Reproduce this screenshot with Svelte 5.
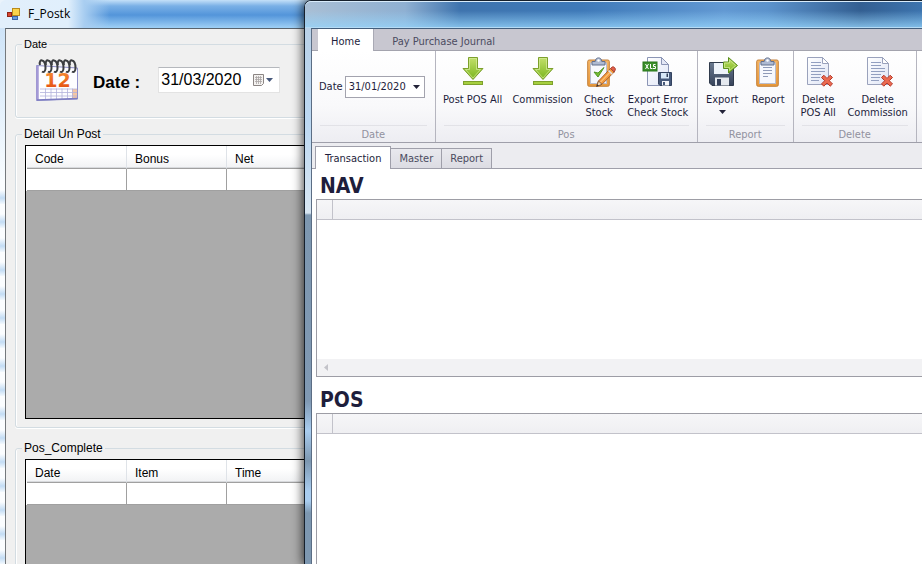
<script>
  let postDate = $state('31/03/2020');
  let ribbonDate = $state('31/01/2020');
  let ribbonTab = $state('Home');
  let pageTab = $state('Transaction');

  const ribbonTabs = ['Home', 'Pay Purchase Journal'];
  const pageTabs = ['Transaction', 'Master', 'Report'];

  const detailColumns = ['Code', 'Bonus', 'Net'];
  const completeColumns = ['Date', 'Item', 'Time'];

  const ribbonGroups = [
    {
      name: 'Pos',
      dense: true,
      items: [
        { lines: ['Post POS All'], icon: 'down', size: 'medium' },
        { lines: ['Commission'], icon: 'down', size: 'medium' },
        { lines: ['Check', 'Stock'], icon: 'check', size: 'small' },
        { lines: ['Export Error', 'Check Stock'], icon: 'xls', size: 'large' }
      ]
    },
    {
      name: 'Report',
      items: [
        { lines: ['Export'], icon: 'export', size: 'small', menu: true },
        { lines: ['Report'], icon: 'clipboard', size: 'small' }
      ]
    },
    {
      name: 'Delete',
      items: [
        { lines: ['Delete', 'POS All'], icon: 'delete', size: 'small' },
        { lines: ['Delete', 'Commission'], icon: 'delete', size: 'medium' }
      ]
    }
  ];
</script>

{#snippet formGrid(columns, label)}
  <div class="form-grid">
    <table aria-label={label}>
      <thead>
        <tr>
          {#each columns as column}<th scope="col">{column}</th>{/each}
          <th class="rest"></th>
        </tr>
      </thead>
      <tbody>
        <tr>
          {#each columns as _}<td></td>{/each}
          <td class="rest"></td>
        </tr>
      </tbody>
    </table>
  </div>
{/snippet}

{#snippet board()}
  <rect x="4.7" y="4" width="21.6" height="26.3" rx="1.5" fill="url(#wood)" stroke="#c4813a" />
  <rect x="7.5" y="7" width="16" height="20.5" fill="#f6f8fd" stroke="#b9bccb" />
  <path d="M9 9V5.5h3.2C12.4 3.200 13.6 1.900 15.500 1.900s3.100 1.300 3.300 3.600H22V9z" fill="#aebad2" stroke="#63708d" />
  <circle cx="15.500" cy="4.500" r="1.200" fill="#fff" />
{/snippet}

{#snippet icon(name)}
  <svg class="icon" viewBox="0 0 32 32" aria-hidden="true">
    {#if name === 'down'}
      <path d="M11.500 1.500h9v11h5.500L16 23.500 6 12.500h5.500z" fill="url(#leaf)" stroke="#7da02c" />
      <path d="M12.500 2.500h7v11h4L16 22 8.500 13.500h4z" fill="none" stroke="#d6ec9b" stroke-opacity=".7" />
      <rect x="6.500" y="25.500" width="19" height="3" fill="#a6cf3f" stroke="#7da02c" />
    {:else if name === 'check'}
      {@render board()}
      <path d="M11 16l4 5 6-9.500-6 5.500z" fill="#77bd36" stroke="#4f9622" />
      <path d="M13.500 30.500l2-5.500L27.500 12.500l3.700 3.500L19 28.300z" fill="#f39a3d" stroke="#a8602a" />
      <path d="M27.500 12.500l1.700-1.500c1.500-.9 3.900 1.500 3 3l-1 2z" fill="#e2604a" stroke="#a84334" />
      <path d="M25.500 14.500l3.700 3.600" stroke="#dde1ea" stroke-width="1.500" />
      <path d="M17 26.600L27 16.400" stroke="#ffd59b" />
      <path d="M13.500 30.500l2-5.500 3.500 3.300z" fill="#f6dcb8" stroke="#8d5c39" />
      <path d="M13.500 30.500l.8-2.300 1.500 1.500z" fill="#333" />
    {:else if name === 'xls'}
      <path d="M5.500 1.500h14l7 7v21h-21z" fill="url(#paper)" stroke="#8b95b5" />
      <path d="M19.500 1.500v7h7z" fill="#e3e7f5" stroke="#8b95b5" />
      <rect x="1" y="6" width="14" height="9" fill="#3b8f2b" stroke="#28761b" />
      <path d="M3.500 8l3 5M6.500 8l-3 5M8.500 8v4.500h2M13.500 8.500h-2v2h2v2h-2.500" fill="none" stroke="#fff" />
      <path d="M16.500 16.500h13v13H18l-1.500-1.500z" fill="#46597a" stroke="#33425f" />
      <rect x="19" y="17" width="8" height="5.500" fill="#d8e8f7" />
      <rect x="24.500" y="17.500" width="1.500" height="3.500" fill="#35415b" />
      <rect x="20" y="25" width="7" height="4.500" fill="#f3f5f9" />
      <rect x="21" y="26" width="2" height="3" fill="#46597a" />
    {:else if name === 'export'}
      <path d="M3.500 6.500h24v23h-21.500l-2.500-2.500z" fill="url(#disk)" stroke="#303b4c" />
      <rect x="8" y="7" width="15" height="11" fill="#eef3fa" />
      <rect x="9" y="21.500" width="14" height="8" fill="#e5e9ef" />
      <rect x="11" y="23" width="4" height="6.500" fill="#35415a" />
      <path d="M17.500 6h5V1.500L31.500 9.500 22.500 17v-4.500h-5z" fill="url(#leaf)" stroke="#5c8f1e" />
      <path d="M18.500 7h5V4l6 5.500-6 5v-3h-5z" fill="none" stroke="#d6ec9b" stroke-opacity=".7" />
    {:else if name === 'clipboard'}
      {@render board()}
      <path d="M11 11.500h9M11 14.500h9M11 17.500h9M11 20.500h5" stroke="#8f9bb8" />
    {:else}
      <path d="M5.500 1.500h15l6 6v21h-21z" fill="url(#paper)" stroke="#9aa2bc" />
      <path d="M20.500 1.500v6h6z" fill="#fff" stroke="#9aa2bc" />
      <path d="M9 6.500h10M9 9.500h10M9 12.500h14M9 15.500h14M9 18.500h10M9 21.500h9M9 24.500h8" stroke="#929fc0" />
      <path d="M19.500 21.500l2.300-2.300 3.200 3.200 3.200-3.200 2.300 2.300-3.200 3.200 3.200 3.200-2.300 2.300-3.200-3.200-3.200 3.200-2.300-2.300 3.200-3.200z" fill="#ea6a50" stroke="#b5392b" />
    {/if}
  </svg>
{/snippet}

<svg class="defs" aria-hidden="true">
  <defs>
    <linearGradient id="leaf" x1="0" y1="0" x2="0" y2="1"><stop offset="0" stop-color="#c3e06c" /><stop offset="1" stop-color="#79b51c" /></linearGradient>
    <linearGradient id="wood" x1="0" y1="0" x2="0" y2="1"><stop offset="0" stop-color="#f6b665" /><stop offset="1" stop-color="#e8983a" /></linearGradient>
    <linearGradient id="paper" x1="0" y1="0" x2="1" y2="1"><stop offset="0" stop-color="#fff" /><stop offset="1" stop-color="#dfe5f6" /></linearGradient>
    <linearGradient id="disk" x1="0" y1="0" x2="0" y2="1"><stop offset="0" stop-color="#6b7a90" /><stop offset="1" stop-color="#37435a" /></linearGradient>
    <linearGradient id="ink" x1="0" y1="0" x2="0" y2="1"><stop offset="0" stop-color="#f79337" /><stop offset="1" stop-color="#e3480f" /></linearGradient>
  </defs>
</svg>

<main class="desktop">
  <section class="window form-window" aria-label="F_Postk">
    <header class="form-title">
      <svg class="app-icon" viewBox="0 0 14 14" aria-hidden="true">
        <rect x="5.500" y="1.500" width="7" height="7" fill="#fbd44c" stroke="#b98a1c" />
        <rect x=".5" y="5.500" width="4" height="4" fill="#d8452e" stroke="#8e2517" />
        <rect x="5.500" y="9.500" width="5" height="3" fill="#6a9ee0" stroke="#3b66a8" />
      </svg>
      <span>F_Postk</span>
    </header>

    <div class="form-body">
      <fieldset class="date-box">
        <legend>Date</legend>
        <div class="date-row">
          <svg class="calendar" viewBox="0 0 42 42" aria-hidden="true">
            <path d="M.5 6.500L41.500 9v31L.5 41.500z" fill="#fdfdff" stroke="#8f90cc" />
            <path d="M1.500 7v34.500" stroke="#a59ad6" stroke-width="2.500" />
            <path d="M36 30h5v9.500h-5z" fill="#f5c7a4" />
            <path d="M4 30h37M4 33.500h37M4 37h37M9.500 29.500v11M15 29.500v11M20.500 29.500v11M26 29.500v11M31.500 29.500v11M36.500 29.500v11" stroke="#b3b2dc" stroke-width=".8" />
            <path d="M1 41l40.500-1.500" stroke="#7c7cc0" stroke-width="1.500" />
            <text x="21.500" y="28" text-anchor="middle" font-family="DejaVu Sans, sans-serif" font-weight="700" font-size="19" fill="url(#ink)">12</text>
            <g fill="none" stroke="#3b3d40" stroke-width="2">
              {#each [4, 10, 16, 22, 28, 34] as x}
                <path d="M{x} 6C{x - 1} 2 {x + 1} 1 {x + 2} 1.500c2.500.5 3.500 4 3.500 7.500 0 3-1.500 5-3.500 3.500" />
              {/each}
            </g>
          </svg>
          <label for="post-date">Date :</label>
          <div class="picker">
            <input id="post-date" type="text" bind:value={postDate} />
            <button type="button" aria-label="Open calendar">
              <svg viewBox="0 0 20 14" aria-hidden="true">
                <path d="M.5 1.500h10v9l-2 2h-8z" fill="#f4f2f0" stroke="#8b8583" />
                <path d="M2 4.500h7M2 6.500h7M2 8.500h7M3.500 3v8M5.500 3v8M7.500 3v8" stroke="#aaa4a4" stroke-width=".8" />
                <path d="M13 5h7l-3.500 4z" fill="#47587b" />
              </svg>
            </button>
          </div>
        </div>
      </fieldset>

      <fieldset class="detail-box">
        <legend>Detail Un Post</legend>
        {@render formGrid(detailColumns, 'Detail Un Post')}
      </fieldset>

      <fieldset class="complete-box">
        <legend>Pos_Complete</legend>
        {@render formGrid(completeColumns, 'Pos_Complete')}
      </fieldset>
    </div>
  </section>

  <section class="window main-window" aria-label="Transactions">
    <header class="glass"></header>
    <div class="client">
      <nav class="ribbon-tabs">
        {#each ribbonTabs as tab}
          <button type="button" class:active={ribbonTab === tab} onclick={() => (ribbonTab = tab)}>{tab}</button>
        {/each}
      </nav>

      <div class="ribbon">
        <section class="group">
          <div class="group-items date-items">
            <label for="ribbon-date">Date</label>
            <div class="combo">
              <input id="ribbon-date" type="text" bind:value={ribbonDate} />
              <button type="button" aria-label="Choose date">
                <svg viewBox="0 0 7 4" aria-hidden="true"><path d="M0 0h7L3.500 4z" fill="#222238" /></svg>
              </button>
            </div>
          </div>
          <div class="caption">Date</div>
        </section>
        {#each ribbonGroups as group}
          <section class="group">
            <div class="group-items" class:dense={group.dense}>
              {#each group.items as item}
                <button type="button" class="tool {item.size}">
                  {@render icon(item.icon)}
                  {#each item.lines as line}<span>{line}</span>{/each}
                  {#if item.menu}
                    <svg class="arrow" viewBox="0 0 7 4" aria-hidden="true"><path d="M0 0h7L3.500 4z" fill="#222238" /></svg>
                  {/if}
                </button>
              {/each}
            </div>
            <div class="caption">{group.name}</div>
          </section>
        {/each}
      </div>

      <nav class="page-tabs">
        {#each pageTabs as tab}
          <button type="button" class:active={pageTab === tab} onclick={() => (pageTab = tab)}>{tab}</button>
        {/each}
      </nav>

      <div class="page">
        <h2>NAV</h2>
        <div class="data-grid nav-grid">
          <table aria-label="NAV">
            <thead><tr><th class="indicator"></th><th></th></tr></thead>
          </table>
          <div class="scrollbar">
            <button type="button" aria-label="Scroll left">
              <svg viewBox="0 0 4 7" aria-hidden="true"><path d="M4 0v7L0 3.500z" fill="#c3c3c9" /></svg>
            </button>
          </div>
        </div>
        <h2>POS</h2>
        <div class="data-grid pos-grid">
          <table aria-label="POS">
            <thead><tr><th class="indicator"></th><th></th></tr></thead>
          </table>
        </div>
      </div>
    </div>
  </section>
</main>

<style>
  :global(body) {
    margin: 0;
    overflow: hidden;
  }

  .desktop,
  .desktop * {
    box-sizing: border-box;
  }

  button,
  input {
    font: inherit;
    color: inherit;
    margin: 0;
    padding: 0;
    border: 0;
    background: none;
  }

  svg {
    display: block;
    flex: none;
    overflow: visible;
  }

  .defs {
    position: absolute;
    width: 0;
    height: 0;
  }

  .desktop {
    position: relative;
    height: 100vh;
    overflow: hidden;
    background: #eaf3fb;
  }

  .window {
    position: absolute;
    display: flex;
    flex-direction: column;
  }

  /* F_Postk form */
  .form-window {
    inset: 0 40% 0 0;
    padding-left: 5px;
    border-radius: 6px 0 0 0;
    font: 12px/14px "Liberation Sans", Arial, sans-serif;
    color: #000;
    background:
      repeating-linear-gradient(180deg, #fbfdff 0 10px, #c3dcf4 18px, #f3f9fe 24px) 0 100% / 5px calc(100% - 180px) no-repeat,
      linear-gradient(180deg, #cfe4f8, #f8fcff) 0 28px / 5px 152px no-repeat,
      linear-gradient(90deg, #e2effb 0, #e0effc 68px, #a9cef1 84px, transparent 110px) 0 0 / 100% 28px no-repeat,
      linear-gradient(180deg, #c4e0f8 0, #7ab0e6 6px, #5395da 15px, #9fd0f6 28px) 0 0 / 100% 28px no-repeat,
      #f3f9fe;
  }

  .form-title {
    display: flex;
    align-items: center;
    gap: 7px;
    height: 28px;
    padding-left: 2px;
    font: 12px/16px "Open Sans", "Noto Sans", sans-serif;
  }

  .app-icon {
    width: 14px;
    height: 14px;
  }

  .form-body {
    flex: 1;
    min-height: 0;
    display: flex;
    flex-direction: column;
    padding: 8px 0 0 9px;
    border-top: 1px solid #59636d;
    border-left: 1px solid #75797d;
    background: #f0f0f0;
  }

  fieldset {
    min-width: 0;
    margin: 0;
    padding: 0 9px 8px;
    border: 1px solid #d3dce2;
    border-radius: 3px;
    box-shadow: inset 1px 0 #fff, 0 1px #fff;
  }

  legend {
    margin-left: -3px;
    padding: 0 2px;
  }

  .date-box legend {
    font-size: 11px;
  }

  .date-row {
    display: flex;
    align-items: center;
    padding: 8px 0 8px 11px;
  }

  .calendar {
    width: 42px;
    height: 42px;
  }

  .date-row label {
    margin: 6px 18px 0 15px;
    font-size: 17px;
    font-weight: 700;
    line-height: 20px;
  }

  .picker {
    display: flex;
    align-items: center;
    width: 122px;
    height: 26px;
    padding: 0 6px 0 2px;
    border: 1px solid #e3e3e3;
    border-top-color: #b5b8bd;
    background: #fff;
  }

  .picker input {
    flex: 1;
    min-width: 0;
    font-size: 16px;
    line-height: 20px;
  }

  .picker svg {
    width: 20px;
    height: 14px;
  }

  .detail-box {
    margin-top: 9px;
  }

  .complete-box {
    flex: none;
    margin-top: 13px;
  }

  .form-grid {
    height: 274px;
    margin-top: 4px;
    border: 1px solid #000;
    background: #ababab;
    overflow: hidden;
  }

  .form-grid table {
    width: 100%;
    border-left: 1px solid #fff;
    border-collapse: separate;
    border-spacing: 0;
    table-layout: fixed;
  }

  .form-grid th {
    width: 100px;
    height: 23px;
    padding: 4px 0 0 8px;
    border-right: 1px solid #dfe3e8;
    border-bottom: 1px solid #a0a0a0;
    box-shadow: inset 0 -1px #d8dadd;
    background: linear-gradient(180deg, #fff 40%, #f1f2f4);
    font-weight: 400;
    text-align: left;
  }

  .form-grid td {
    height: 22px;
    padding: 0;
    border-right: 1px solid #a0a0a0;
    border-bottom: 1px solid #a0a0a0;
    background: #fff;
  }

  .form-grid .rest {
    width: auto;
  }

  /* Main window */
  .main-window {
    inset: 0 0 0 304px;
    padding-left: 6px;
    border: 1px solid #16202c;
    border-width: 1px 0 0 1px;
    border-radius: 7px 0 0 0;
    box-shadow: 0 0 11px 1px rgba(0, 0, 0, 0.75);
    font: 11px/13px "DejaVu Sans Condensed", Tahoma, sans-serif;
    color: #1e1e3c;
    background:
      linear-gradient(180deg, #b9cfe4 0, #bcd8f2 120px, #d8e6f2 212px, #7d97b0 214px, #8099b3 400px, #a9cdf0 430px, #7d97b0 460px, #a9cdf0 490px, #a9cdf0 500px, #7d97b0 512px);
    overflow: visible;
  }

  .glass {
    height: 27px;
    margin-left: -6px;
    border-top: 1px solid #d9ecfb;
    border-bottom: 1px solid #b5dbf5;
    border-radius: 6px 0 0 0;
    background:
      linear-gradient(180deg, transparent 35%, rgba(150, 212, 250, 0.75)),
      linear-gradient(90deg, #a9bfd5 0, #8fb0d2 100px, #3f74ae 155px, #3f7ab9 45%, #6299d3 68%, #5c93cc 75%, #335f92 90%, #3d74ae);
  }

  .client {
    flex: 1;
    min-height: 0;
    display: flex;
    flex-direction: column;
    border-top: 1px solid #435e7c;
    border-left: 1px solid #5b6d84;
    background: #ececf0;
  }

  .ribbon-tabs {
    display: flex;
    height: 22px;
    padding-left: 6px;
    border-bottom: 1px solid #a4a4ae;
    background: #c8c7d0;
    color: #4b4b60;
  }

  .ribbon-tabs button {
    height: 22px;
    padding: 2px 18px 0;
  }

  .ribbon-tabs .active {
    padding: 2px 13px 0;
    border-right: 1px solid #a9a9b4;
    background: #fff;
    color: #1e1e3c;
  }

  .ribbon {
    display: flex;
    height: 92px;
    border-bottom: 1px solid #9f9faa;
    background: linear-gradient(180deg, #fff, #f9f9fb 60%, #ededf2);
  }

  .group {
    display: flex;
    flex-direction: column;
    border-right: 1px solid #b5b5bf;
  }

  .group-items {
    flex: 1;
    display: flex;
    gap: 3px;
    padding: 5px 3px 0;
  }

  .group-items.dense {
    gap: 0;
    padding: 5px 2px 0;
  }

  .group-items.date-items {
    align-items: flex-start;
    gap: 2px;
    padding: 25px 10px 0 7px;
    line-height: 22px;
  }

  .combo {
    display: flex;
    align-items: center;
    width: 80px;
    height: 22px;
    padding: 0 4px 0 3px;
    border: 1px solid #a3a3ae;
    background: #fff;
  }

  .combo input {
    flex: 1;
    min-width: 0;
  }

  .combo svg,
  .arrow {
    width: 7px;
    height: 4px;
  }

  .tool {
    display: flex;
    flex-direction: column;
    align-items: center;
    white-space: nowrap;
  }

  .small {
    width: 43px;
  }

  .medium {
    width: 70px;
  }

  .large {
    width: 74px;
  }

  .icon {
    width: 32px;
    height: 32px;
    margin-bottom: 5px;
  }

  .arrow {
    margin-top: 4px;
  }

  .caption {
    height: 17px;
    margin: 0 8px;
    padding-top: 2px;
    border-top: 1px solid #e2e2e7;
    color: #92929f;
    text-align: center;
  }

  .page-tabs {
    display: flex;
    align-items: flex-end;
    height: 26px;
    padding-left: 3px;
    border-bottom: 1px solid #9f9faa;
    color: #4b4b60;
  }

  .page-tabs button {
    height: 20px;
    padding: 0 8px;
    border: 1px solid #9f9faa;
    border-width: 1px 1px 0 0;
    background: linear-gradient(180deg, #e9e9ee, #dcdce3);
  }

  .page-tabs .active {
    height: 23px;
    margin-bottom: -1px;
    padding: 0 9px;
    border-left-width: 1px;
    background: #fff;
    color: #1e1e3c;
  }

  .page {
    flex: 1;
    min-height: 0;
    display: flex;
    flex-direction: column;
    padding: 5px 0 0 4px;
    background: #fff;
  }

  h2 {
    margin: 0;
    padding: 0 0 0 4px;
    font-size: 21px;
    font-weight: 700;
    line-height: 25px;
  }

  .data-grid {
    display: flex;
    flex-direction: column;
    border: 1px solid #9d9da5;
    border-right: 0;
  }

  .nav-grid {
    height: 178px;
    margin-bottom: 11px;
  }

  .pos-grid {
    flex: 1;
    border-bottom: 0;
  }

  .data-grid table {
    width: 100%;
    border-collapse: separate;
    border-spacing: 0;
    table-layout: fixed;
  }

  .data-grid th {
    height: 20px;
    padding: 0;
    border-bottom: 1px solid #c2c2ca;
    background: linear-gradient(180deg, #f6f6f8, #efeff2);
  }

  .data-grid .indicator {
    width: 16px;
    border-right: 1px solid #c2c2ca;
  }

  .scrollbar {
    display: flex;
    height: 17px;
    margin-top: auto;
    background: #f2f2f4;
  }

  .scrollbar button {
    display: grid;
    place-items: center;
    width: 17px;
  }

  .scrollbar svg {
    width: 4px;
    height: 7px;
  }
</style>
